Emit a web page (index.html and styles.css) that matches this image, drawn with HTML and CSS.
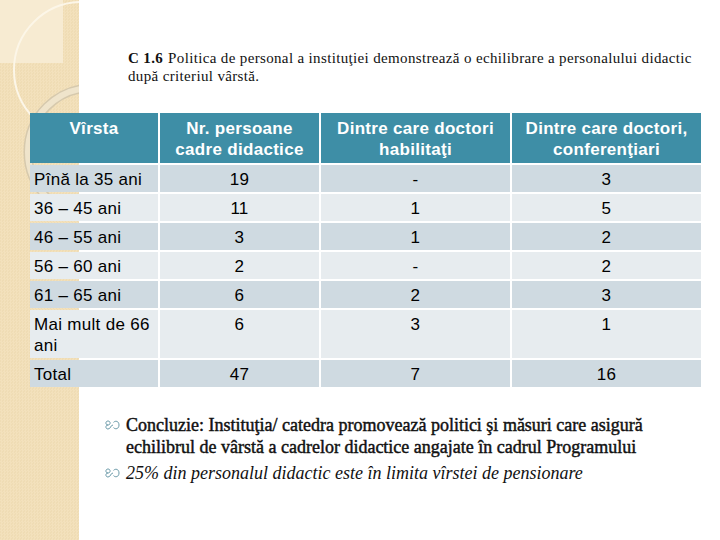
FILE: index.html
```html
<!DOCTYPE html>
<html lang="ro">
<head>
<meta charset="utf-8">
<title>C 1.6</title>
<link rel="stylesheet" href="styles.css">
</head>
<body>
<div class="page">
  <div class="deco">
    <svg width="79" height="540" viewBox="0 0 79 540">
      <rect x="0" y="0" width="63" height="63" fill="#f7ebd2"/>
      <circle cx="82" cy="70" r="68" fill="none" stroke="#fcf6e8" stroke-width="2"/>
      <circle cx="92" cy="152" r="64" fill="none" stroke="#d6c9ad" stroke-width="9"/>
      <circle cx="92" cy="152" r="64" fill="none" stroke="#efe4cb" stroke-width="6"/>
    </svg>
  </div>
  <p class="title"><b class="code">C 1.6</b>Politica de personal a instituţiei demonstrează o echilibrare a personalului didactic după criteriul vârstă.</p>
  <table class="data">
    <colgroup>
      <col class="c1"><col class="c2"><col class="c3"><col class="c4">
    </colgroup>
    <thead>
      <tr><th>Vîrsta</th><th>Nr. persoane cadre didactice</th><th>Dintre care doctori habilitaţi</th><th>Dintre care doctori, conferenţiari</th></tr>
    </thead>
    <tbody>
      <tr class="dark"><td class="lbl">Pînă la 35 ani</td><td>19</td><td>-</td><td>3</td></tr>
      <tr class="light"><td class="lbl">36 – 45 ani</td><td>11</td><td>1</td><td>5</td></tr>
      <tr class="dark"><td class="lbl">46 – 55 ani</td><td>3</td><td>1</td><td>2</td></tr>
      <tr class="light"><td class="lbl">56 – 60 ani</td><td>2</td><td>-</td><td>2</td></tr>
      <tr class="dark"><td class="lbl">61 – 65 ani</td><td>6</td><td>2</td><td>3</td></tr>
      <tr class="light"><td class="lbl">Mai mult de 66 ani</td><td>6</td><td>3</td><td>1</td></tr>
      <tr class="dark"><td class="lbl">Total</td><td>47</td><td>7</td><td>16</td></tr>
    </tbody>
  </table>
  <ul class="notes">
    <li><svg class="bul" width="16" height="10" viewBox="0 0 16 10"><path d="M4 5C1.2 5 1.2 1 4 1S6.8 5 4 5C1.2 5 1.2 9 4 9S6.5 5 9 5" fill="none" stroke="#6b9aa9" stroke-width="1"/><path d="M9.5 2.4C11.5 0.2 15 1.2 15 5S11.5 9.8 9.5 7.6" fill="none" stroke="#6b9aa9" stroke-width="1"/></svg><span class="txt strong">Concluzie: Instituţia/ catedra promovează politici şi măsuri care asigură echilibrul de vârstă a cadrelor didactice angajate în cadrul Programului</span></li>
    <li><svg class="bul" width="16" height="10" viewBox="0 0 16 10"><path d="M4 5C1.2 5 1.2 1 4 1S6.8 5 4 5C1.2 5 1.2 9 4 9S6.5 5 9 5" fill="none" stroke="#6b9aa9" stroke-width="1"/><path d="M9.5 2.4C11.5 0.2 15 1.2 15 5S11.5 9.8 9.5 7.6" fill="none" stroke="#6b9aa9" stroke-width="1"/></svg><span class="txt ital">25% din personalul didactic este în limita vîrstei de pensionare</span></li>
  </ul>
</div>
</body>
</html>
```

FILE: styles.css
```css
html, body {
  margin: 0;
  padding: 0;
  background: #fff;
}

.page {
  position: relative;
  width: 720px;
  height: 540px;
  overflow: hidden;
  background:
    linear-gradient(to right, transparent 79px, #fff 79px),
    repeating-conic-gradient(#f3e1bc 0 25%, #efdcb4 0 50%) 0 0 / 3px 3px;
}

.deco {
  position: absolute;
  left: 0;
  top: 0;
  width: 79px;
  height: 540px;
  z-index: 0;
}

.deco svg {
  display: block;
}

.title {
  position: relative;
  z-index: 1;
  margin: 0;
  padding: 49px 20px 0 128px;
  font-family: "Liberation Serif", "Times New Roman", serif;
  font-size: 15px;
  line-height: 18px;
  letter-spacing: 0.35px;
  color: #111;
}

.title .code {
  display: inline-block;
  margin-right: 5px;
}

.data {
  position: relative;
  z-index: 1;
  margin: 26px 0 0 28px;
  border-collapse: separate;
  border-spacing: 2px;
  table-layout: fixed;
  font-family: "Liberation Sans", Arial, sans-serif;
  font-size: 17px;
  line-height: 21px;
  letter-spacing: 0.3px;
  color: #000;
}

.c1 { width: 128px; }
.c2 { width: 159px; }
.c3 { width: 189px; }
.c4 { width: 189px; }

.data th {
  background: #3e8ea6;
  color: #fff;
  font-weight: bold;
  text-align: center;
  vertical-align: top;
  padding: 5px 6px 3px;
}

.data td {
  text-align: center;
  vertical-align: top;
  padding: 4px 4px 2px;
}

.data td.lbl {
  text-align: left;
}

.dark td { background: #cfdae1; }
.light td { background: #e7ecef; }

.notes {
  position: relative;
  z-index: 1;
  list-style: none;
  margin: 25px 0 0 0;
  padding: 0 50px 0 104px;
  font-family: "Liberation Serif", "Times New Roman", serif;
  font-size: 18px;
  line-height: 22px;
  color: #111;
}

.notes li {
  display: flex;
  align-items: flex-start;
  gap: 6px;
  margin-bottom: 4px;
}

.bul {
  flex: none;
  margin-top: 6px;
}

.txt.strong {
  -webkit-text-stroke: 0.45px #111;
}

.txt.ital {
  font-style: italic;
}
```
